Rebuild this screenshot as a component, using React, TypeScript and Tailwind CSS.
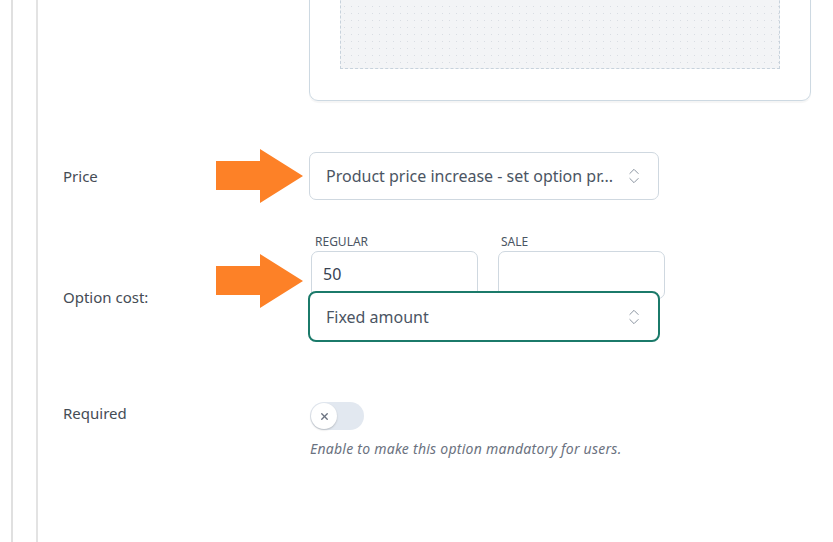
import { ChevronsUpDown, X } from 'lucide-react';

function Arrow() {
  return (
    <svg width="87" height="54" viewBox="0 0 87 54" className="block">
      <polygon points="0,12 44,12 44,0 87,27 44,54 44,41 0,41" fill="#fd8127" />
    </svg>
  );
}

function SelectBox({ value, className }: { value: string; className: string }) {
  return (
    <div className={`flex items-center justify-between bg-white pl-[16px] pr-[14px] ${className}`}>
      <span className="whitespace-nowrap text-[16px] text-[#4b5563]">{value}</span>
      <ChevronsUpDown size={20} strokeWidth={1.2} className="shrink-0 text-[#8b95a1]" />
    </div>
  );
}

export default function App() {
  return (
    <div
      className="flex h-[542px] w-[833px] overflow-hidden bg-white"
      style={{ fontFamily: '"Noto Sans", "Open Sans", sans-serif' }}
    >
      {/* side rails */}
      <div className="ml-[11px] w-[2px] bg-[#e0e0e0]" />
      <div className="ml-[23px] w-[2px] bg-[#e3e3e3]" />

      <div className="flex-1 pl-[25px]">
        {/* image card (cut at top) */}
        <div className="-mt-[61px] ml-[246px] w-[502px] rounded-[9px] border border-[#cdd9e2] px-[30px] pb-[31px] pt-[20px] shadow-[0_2px_1px_rgba(0,0,0,0.04)]">
          <div className="h-[109px] border border-dashed border-[#c7d2dc] bg-[#f3f4f6] bg-[radial-gradient(#d9dde3_0.8px,transparent_0.8px)] bg-[length:7px_7px]" />
        </div>

        {/* Price */}
        <div className="mt-[48px] grid grid-cols-[153px_93px_1fr] items-center">
          <div className="text-[15px] text-[#454c55]">Price</div>
          <Arrow />
          <SelectBox
            value="Product price increase - set option pr..."
            className="h-[48px] w-[350px] rounded-[7px] border border-[#cfd8e0]"
          />
        </div>

        {/* Option cost */}
        <div className="mt-[30px] grid grid-cols-[153px_93px_1fr] items-start">
          <div className="mt-[53px] text-[15px] text-[#454c55]">Option cost:</div>
          <div className="mt-[21px]">
            <Arrow />
          </div>
          <div className="flex flex-col">
            <div className="flex gap-[20px] pl-[2px]">
              <div className="flex w-[167px] flex-col">
                <span className="pl-[4px] text-[12px] leading-[18px] text-[#4b5563]">REGULAR</span>
                <div className="h-[48px] rounded-[7px] border border-[#cfd8e0] pl-[11px] pt-[10px] text-[16px] text-[#374151]">
                  50
                </div>
              </div>
              <div className="flex w-[167px] flex-col">
                <span className="pl-[3px] text-[12px] leading-[18px] text-[#4b5563]">SALE</span>
                <div className="h-[48px] rounded-[7px] border border-[#cfd8e0]" />
              </div>
            </div>
            <SelectBox
              value="Fixed amount"
              className="relative -mt-[8px] -ml-px h-[51px] w-[352px] rounded-[8px] border-2 border-[#1b7a6a]"
            />
          </div>
        </div>

        {/* Required */}
        <div className="mt-[60px] grid grid-cols-[246px_1fr] items-start">
          <div className="text-[15px] text-[#454c55]">Required</div>
          <div className="flex flex-col pl-[1px]">
            <div className="flex h-[28px] w-[54px] items-center rounded-full bg-[#e2e8f0] p-[1px]">
              <div className="flex h-[26px] w-[26px] items-center justify-center rounded-full bg-white shadow-[0_1px_2px_rgba(0,0,0,0.2)]">
                <X size={11} strokeWidth={3} className="text-[#6b7280]" />
              </div>
            </div>
            <p className="mt-[8px] text-[14px] italic tracking-[0.25px] text-[#6b7280]">
              Enable to make this option mandatory for users.
            </p>
          </div>
        </div>
      </div>
    </div>
  );
}
